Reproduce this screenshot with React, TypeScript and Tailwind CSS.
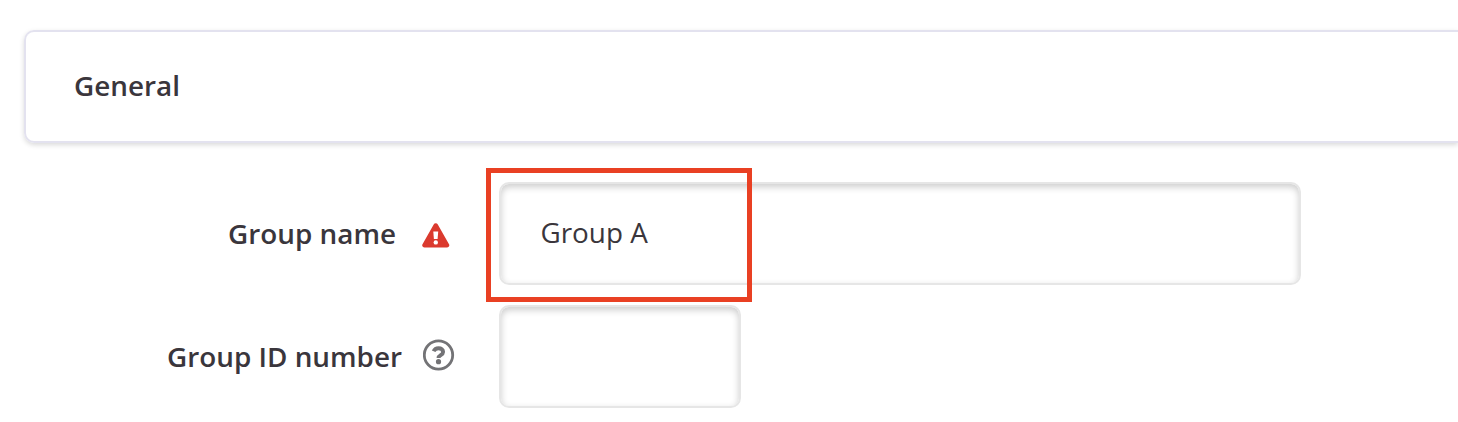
import type { ReactNode } from "react";

function WarningIcon() {
  return (
    <svg className="h-[25px] w-[28px]" viewBox="0 0 28 25">
      <path
        d="M11.7 1.6a2.3 2.3 0 0 1 4.1 0l11.2 19.6c.9 1.6-.2 3.2-2 3.2H2.5c-1.8 0-2.9-1.6-2-3.2z"
        fill="#db3a2e"
      />
      <path d="M11.3 8.5h4.9l-.6 7.5h-3.7z" fill="#fff" />
      <circle cx="13.8" cy="19.4" r="2.2" fill="#fff" />
    </svg>
  );
}

function HelpIcon() {
  return (
    <svg className="h-8 w-8" viewBox="0 0 32 32" fill="none">
      <circle cx="15.5" cy="16" r="14.2" stroke="#737376" strokeWidth="2.8" />
      <path
        d="M10.6 12.3c.9-2 2.5-3.1 4.9-3.1 2.8 0 4.6 1.5 4.6 3.7 0 3.2-4.6 3.1-4.6 6"
        stroke="#737376"
        strokeWidth="3.9"
      />
      <circle cx="15.5" cy="22.7" r="2.6" fill="#737376" />
    </svg>
  );
}

function Row({ label, icon, children }: { label: string; icon: ReactNode; children: ReactNode }) {
  return (
    <div className="flex h-[103px] items-center">
      <div className="flex w-[455px] shrink-0 items-center justify-end font-semibold">
        <span className="whitespace-nowrap">{label}</span>
        {icon}
      </div>
      <div className="ml-11 h-full">{children}</div>
    </div>
  );
}

function App() {
  const field =
    "flex h-full items-center rounded-[10px] border-[2.5px] border-[#e6e6e6] pb-px pl-[39.5px] shadow-[inset_0_3px_7px_rgba(0,0,0,0.2)]";

  return (
    <div className="h-[422px] overflow-hidden bg-white pt-[30px] font-['Open_Sans',sans-serif] text-[27.85px] leading-none text-[#3a363c]">
      <div className="ml-6 flex h-[113px] items-center rounded-l-[10px] border-2 border-r-0 border-[#e3e2ef] pb-px pl-12 font-semibold shadow-[0_2px_5px_rgba(0,0,0,0.15)]">
        <span>General</span>
      </div>
      <div className="flex flex-col gap-5 pt-[39px]">
        <Row label="Group name" icon={<span className="mr-[5px] ml-[26px] pt-[4px]"><WarningIcon /></span>}>
          <div className="relative h-full w-[802px]">
            <div className={field}>Group A</div>
            {/* highlight around the value */}
            <div className="absolute -top-[14px] -left-[13px] h-[134px] w-[266px] border-5 border-[#e94023]" />
          </div>
        </Row>
        <Row label="Group ID number" icon={<span className="ml-[21px] pb-[3px]"><HelpIcon /></span>}>
          <div className="h-full w-[242px]">
            <div className={field} />
          </div>
        </Row>
      </div>
    </div>
  );
}

export default App;
